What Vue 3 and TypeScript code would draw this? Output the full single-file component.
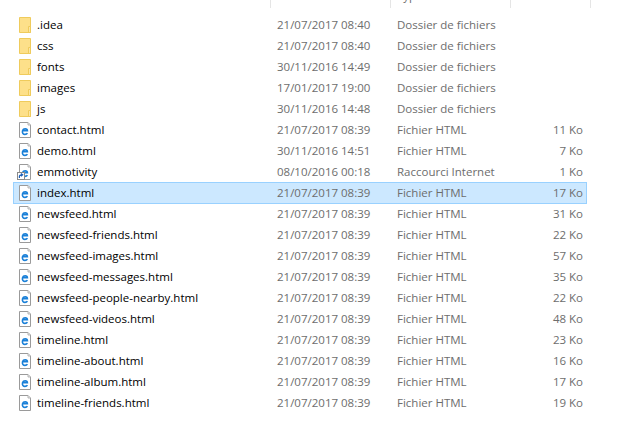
<script setup lang="ts">
type Row = {
  name: string
  date: string
  type: string
  size?: string
  icon: 'folder' | 'html' | 'link'
}

const HTML = 'Fichier HTML'
const DIR = 'Dossier de fichiers'

const rows: Row[] = [
  { name: '.idea', date: '21/07/2017 08:40', type: DIR, icon: 'folder' },
  { name: 'css', date: '21/07/2017 08:40', type: DIR, icon: 'folder' },
  { name: 'fonts', date: '30/11/2016 14:49', type: DIR, icon: 'folder' },
  { name: 'images', date: '17/01/2017 19:00', type: DIR, icon: 'folder' },
  { name: 'js', date: '30/11/2016 14:48', type: DIR, icon: 'folder' },
  { name: 'contact.html', date: '21/07/2017 08:39', type: HTML, size: '11 Ko', icon: 'html' },
  { name: 'demo.html', date: '30/11/2016 14:51', type: HTML, size: '7 Ko', icon: 'html' },
  { name: 'emmotivity', date: '08/10/2016 00:18', type: 'Raccourci Internet', size: '1 Ko', icon: 'link' },
  { name: 'index.html', date: '21/07/2017 08:39', type: HTML, size: '17 Ko', icon: 'html' },
  { name: 'newsfeed.html', date: '21/07/2017 08:39', type: HTML, size: '31 Ko', icon: 'html' },
  { name: 'newsfeed-friends.html', date: '21/07/2017 08:39', type: HTML, size: '22 Ko', icon: 'html' },
  { name: 'newsfeed-images.html', date: '21/07/2017 08:39', type: HTML, size: '57 Ko', icon: 'html' },
  { name: 'newsfeed-messages.html', date: '21/07/2017 08:39', type: HTML, size: '35 Ko', icon: 'html' },
  { name: 'newsfeed-people-nearby.html', date: '21/07/2017 08:39', type: HTML, size: '22 Ko', icon: 'html' },
  { name: 'newsfeed-videos.html', date: '21/07/2017 08:39', type: HTML, size: '48 Ko', icon: 'html' },
  { name: 'timeline.html', date: '21/07/2017 08:39', type: HTML, size: '23 Ko', icon: 'html' },
  { name: 'timeline-about.html', date: '21/07/2017 08:39', type: HTML, size: '16 Ko', icon: 'html' },
  { name: 'timeline-album.html', date: '21/07/2017 08:39', type: HTML, size: '17 Ko', icon: 'html' },
  { name: 'timeline-friends.html', date: '21/07/2017 08:39', type: HTML, size: '19 Ko', icon: 'html' },
]
</script>

<template>
  <div class="explorer">
    <div class="head">
      <div class="col col-name"></div>
      <div class="col col-date"></div>
      <div class="col col-type"><span>Type</span></div>
      <div class="col col-size"></div>
    </div>
    <div class="list">
      <div v-for="r in rows" :key="r.name" class="row" :class="{ selected: r.name === 'index.html' }">
        <div class="name">
          <svg v-if="r.icon === 'folder'" class="icon" width="16" height="16" viewBox="0 0 16 16">
            <path d="M3.5 .5H14.5V15.5H3.5Z" fill="#fde08a" stroke="#efcb5c" />
            <path d="M12.5 9.5H14.5V15.5H12.5Z" fill="#fbe6a5" stroke="#efcb5c" />
          </svg>
          <svg v-else class="icon" width="16" height="16" viewBox="0 0 16 16">
            <path d="M3.5 .5H12L14.5 3V15.5H3.5Z" fill="#fff" stroke="#9a9a9a" />
            <path d="M12 .5V3H14.5" fill="#e4e4e4" stroke="#b5b5b5" />
            <path d="M6.6 8.8H11.4C11.3 6.4 7.4 6.2 6.6 8.6C5.8 11 7.4 12.4 9 12.4C10 12.4 10.9 12 11.4 11.2" fill="none" stroke="#1a80d8" stroke-width="1.6" />
            <template v-if="r.icon === 'link'">
              <rect x="1.5" y="8.5" width="7" height="7" fill="#fff" stroke="#8a8a8a" />
              <path d="M3.4 14V12.2C3.4 11.2 4.2 10.8 6.2 10.8M4.9 9.6L6.6 10.8L4.9 12.2" fill="none" stroke="#1c5fb8" stroke-width="1.2" />
            </template>
          </svg>
          <span>{{ r.name }}</span>
        </div>
        <div class="date">{{ r.date }}</div>
        <div class="type">{{ r.type }}</div>
        <div class="size">{{ r.size }}</div>
      </div>
    </div>
  </div>
</template>

<style>
html,
body {
  background: #fff;
}
</style>

<style scoped>
.explorer {
  width: 618px;
  height: 433px;
  overflow: hidden;
  font-family: 'Open Sans', 'Liberation Sans', Arial, sans-serif;
  font-size: 11.5px;
  color: #6d6d6d;
}
.head {
  display: flex;
  height: 8px;
  overflow: hidden;
}
.col {
  border-right: 1px solid #e5e5e5;
  box-sizing: border-box;
}
.col-name {
  width: 271px;
}
.col-date {
  width: 120px;
}
.col-type {
  width: 120px;
  padding-left: 6px;
  line-height: 14px;
}
.col-type span {
  display: block;
  margin-top: -11px;
}
.col-size {
  width: 80px;
}
.list {
  padding: 6px 32px 0 14px;
}
.row {
  display: flex;
  align-items: center;
  height: 21px;
}
.row.selected {
  box-sizing: border-box;
  height: 22px;
  margin: 0 -1px -1px;
  padding-bottom: 1px;
  background: #cce8ff;
  border: 1px solid #99d1ff;
}
.name {
  display: flex;
  align-items: center;
  width: 263px;
  color: #000;
  padding-left: 2px;
  box-sizing: border-box;
}
.icon {
  margin-right: 5px;
  flex: none;
}
.date {
  width: 120px;
}
.type {
  width: 116px;
}
.size {
  width: 70px;
  text-align: right;
}
</style>
